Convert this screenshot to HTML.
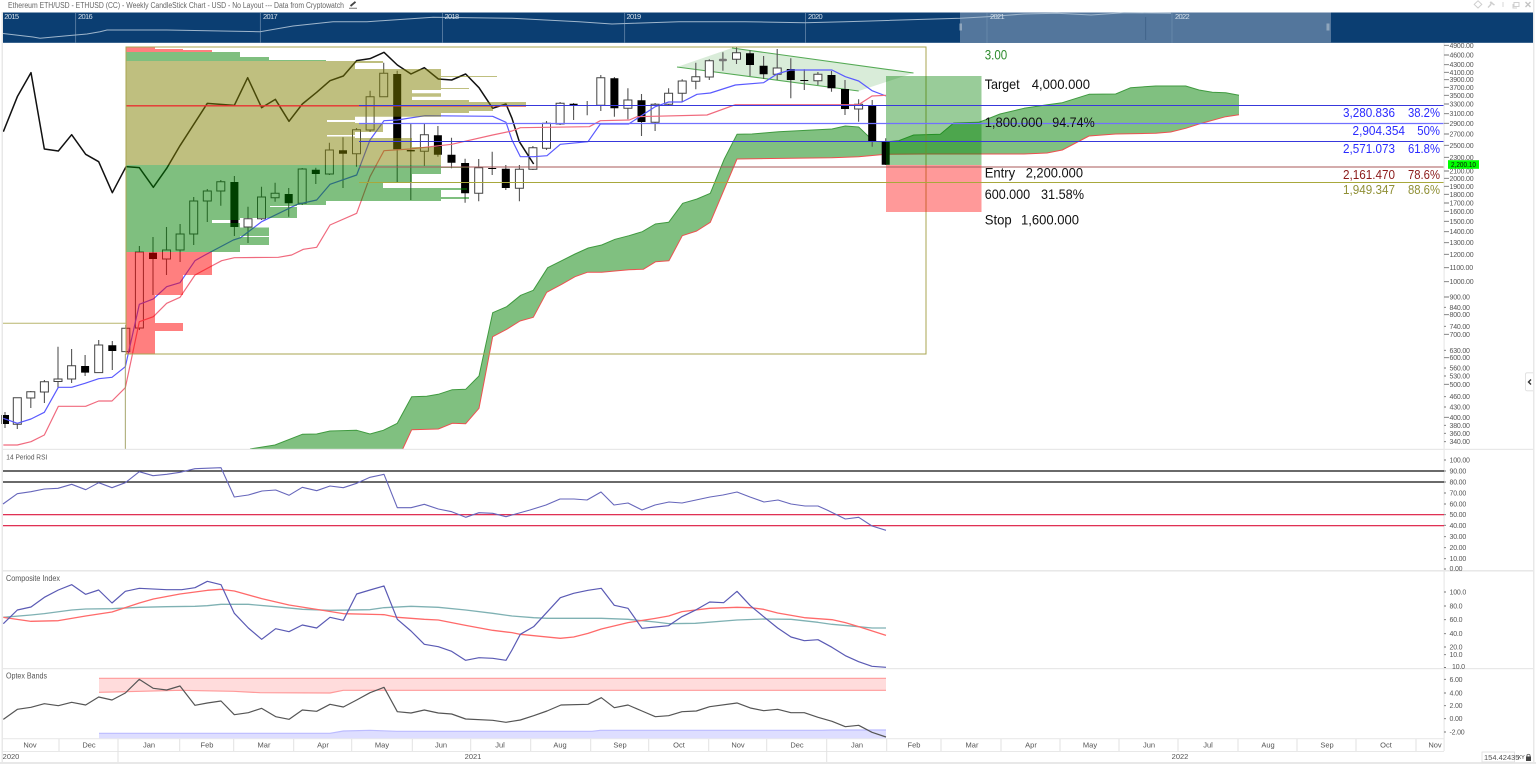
<!DOCTYPE html>
<html lang="en">
<head>
<meta charset="utf-8">
<title>Ethereum ETH/USD Weekly Chart</title>
<style>
html,body{margin:0;padding:0;background:#fff;width:1536px;height:764px;overflow:hidden}
svg{display:block;filter:blur(.3px)}
text{font-family:"Liberation Sans",sans-serif}
.ax text{font-size:7px;letter-spacing:-.2px;fill:#555}
.tm text{font-size:7.5px;fill:#555;text-anchor:middle}
.nv text{font-size:7.5px;fill:#d5e0ea}
.big text{font-size:14px;fill:#111}
.fb text{font-size:12.5px}
.ln{fill:none;stroke-linejoin:round}
</style>
</head>
<body>
<svg width="1536" height="764" viewBox="0 0 1536 764" xmlns="http://www.w3.org/2000/svg">
<rect width="1536" height="764" fill="#fff"/>

<!-- title -->
<text x="8" y="8" font-size="8" fill="#666" textLength="336" lengthAdjust="spacingAndGlyphs">Ethereum ETH/USD - ETHUSD (CC) - Weekly CandleStick Chart - USD - No Layout --- Data from Cryptowatch</text>
<path d="M350.5 6L355.5 1.8" stroke="#444" stroke-width="1.8" fill="none"/><path d="M349 8.2H357" stroke="#555" stroke-width=".8"/>

<!-- window icons -->
<g fill="none" stroke="#cfcfcf" stroke-width="1">
<path d="M1478 .8L1481.8 4.4L1478 8L1474.2 4.4Z"/>
<path d="M1488 7.5L1491 4.5M1490 2L1494.5 5M1492 1.8L1490 5.5" stroke-width="1.4"/>
<path d="M1503 2V7" stroke="#e6e6e6" stroke-width="1.6"/>
<path d="M1514 2.5H1519V6.5H1514ZM1513 4V8H1517"/>
<path d="M1525.5 2L1530.5 7M1530.5 2L1525.5 7" stroke-width="1.4" stroke="#c4c4c4"/>
</g>

<!-- navigator -->
<g class="nv">
<rect x="3" y="12.5" width="1530" height="30.3" fill="#0b3e72"/>
<rect x="960" y="12.5" width="371" height="30.3" fill="#53769c"/>
<path d="M75.7 13V43M260.3 13V43M442.5 13V43M624.7 13V43M805.5 13V43M987 13V43M1172 13V43" stroke="#6f8fb0" stroke-width=".7"/>
<path d="M1145.7 17V40" stroke="#3d5f85" stroke-width=".8"/>
<path d="M3 33.5L33 37L40 38.3L67 35.7L87 34L100 31.7L107 30L167 30L260 31.7L293 26L333 21.7L367 21.7L433 17.3L512 18.3L579 21.7L612 24L679 21.7L745 21.7L805 22.7L845 21.7L960 18.3L987 16.7L1024 14L1057 13.3L1091 15L1124 12.7L1171 13.3" fill="none" stroke="#9fb6cc" stroke-width="1"/>
<rect x="959.5" y="23.5" width="2.5" height="7" fill="#8fa5bc"/><rect x="1326.5" y="23.5" width="3" height="7" fill="#8fa5bc"/>
<text x="4.3" y="19" textLength="14.7">2015</text>
<text x="78" y="19" textLength="14.7">2016</text>
<text x="263" y="19" textLength="14.7">2017</text>
<text x="444.5" y="19" textLength="14.7">2018</text>
<text x="626.5" y="19" textLength="14.7">2019</text>
<text x="808" y="19" textLength="14.7">2020</text>
<text x="990" y="19" textLength="14.7">2021</text>
<text x="1175" y="19" textLength="14.7">2022</text>
</g>

<!-- cloud -->
<polygon fill="#80c080" points="250,449 275,445 302.3,434.3 316.7,434 330,431 356.7,430.3 370,434 383.3,430.3 397.3,423.3 411.7,396.7 426.7,396.3 438.3,394.3 452.3,389.7 465.7,389.3 479,376 492.7,312.7 506.7,306.7 520.7,295.3 533.3,290.3 547.7,267.7 561.7,260.7 575,254 588.3,248 601.7,245 615,239.3 629,235.7 642.3,231.7 655.3,224 668.7,222.3 682.7,203.3 697,199 710.3,193.3 724.3,159 737,134.3 752,134 778.7,131.7 832,129 845.3,126 858.7,127 865.3,133.3 873.7,141.3 885.7,142 898.7,140.7 913.7,135 940.3,134.3 953.7,123 978.7,122.3 985,120 1000,114 1024,108.3 1047.3,104.7 1062.3,102.7 1089,94.3 1115.7,94 1130.7,87.7 1155.7,86 1185.7,86 1199,90 1212.3,92.3 1225.7,92.7 1239,95.3 1239,114.7 1225.7,116.7 1199,124 1185.7,128.3 1170.7,132 1155.7,133.3 1115.7,134 1089,136 1062.3,150 1047,153 1024,154 981,154 925,154 886,154.3 858.7,156.7 832,157.7 737,159 710.3,222.3 696.7,231 682.3,235.7 669,260.7 655.7,261.7 643.3,269.3 629,269.7 615,271 601.7,272.3 587.3,272.3 575,276.7 561.7,284.3 546.7,292.3 533.3,317.3 520,321 506.7,329.3 492.7,336.7 479,408.3 465.7,423.7 452.3,423.3 438.3,429 411.7,429.7 402.7,449"/>
<polyline class="ln" stroke="#3f9a3f" stroke-width="1" points="250,449 275,445 302.3,434.3 316.7,434 330,431 356.7,430.3 370,434 383.3,430.3 397.3,423.3 411.7,396.7 426.7,396.3 438.3,394.3 452.3,389.7 465.7,389.3 479,376 492.7,312.7 506.7,306.7 520.7,295.3 533.3,290.3 547.7,267.7 561.7,260.7 575,254 588.3,248 601.7,245 615,239.3 629,235.7 642.3,231.7 655.3,224 668.7,222.3 682.7,203.3 697,199 710.3,193.3 724.3,159 737,134.3 752,134 778.7,131.7 832,129 845.3,126 858.7,127 865.3,133.3 873.7,141.3 885.7,142 898.7,140.7 913.7,135 940.3,134.3 953.7,123 978.7,122.3 985,120 1000,114 1024,108.3 1047.3,104.7 1062.3,102.7 1089,94.3 1115.7,94 1130.7,87.7 1155.7,86 1185.7,86 1199,90 1212.3,92.3 1225.7,92.7 1239,95.3"/>
<polyline class="ln" stroke="#ee5050" stroke-width="1" points="402.7,449 411.7,429.7 438.3,429 452.3,423.3 465.7,423.7 479,408.3 492.7,336.7 506.7,329.3 520,321 533.3,317.3 546.7,292.3 561.7,284.3 575,276.7 587.3,272.3 601.7,272.3 615,271 629,269.7 643.3,269.3 655.7,261.7 669,260.7 682.3,235.7 696.7,231 710.3,222.3 737,159 832,157.7 858.7,156.7 886,154.3 925,154 981,154 1024,154 1047,153 1062.3,150 1089,136 1115.7,134 1155.7,133.3 1170.7,132 1185.7,128.3 1199,124 1225.7,116.7 1239,114.7"/>

<!-- channel -->
<polygon points="677,67 732,48 913.5,73 858.7,91" fill="#008000" fill-opacity=".15"/>
<path d="M732 48L913.5 73M677 67L858.7 91" stroke="#55aa55" stroke-width="1.1" fill="none"/>

<!-- wicks -->
<path fill="none" stroke="#555" stroke-width="1.1" d="M5 412V428M17.3 398V429M30.8 391V408M44.4 380V403M58 346.7V388M71.6 349V383M85.1 355V376M98.7 340V373M112.3 341V370M125.8 325V352M139.4 246V330M153 237V295M166.5 227V275M180.1 224V262M193.7 197V245M207.3 189V222M220.8 180V205.7M234.4 176V236M248 206.7V243M261.5 186.7V220M275.1 182.7V201.7M288.7 188V216.7M302.2 168V205M315.8 167.7V184M329.4 142.7V175M343 137.3V188M356.5 128V166.7M370.1 90.7V132M383.7 62.7V97M397.2 70.7V182.3M410.8 123.3V200M424.4 124V165.7M437.9 126V156.7M451.5 137.7V168.3M465.1 158.7V202.7M478.7 159V201.3M492.2 151.7V175M505.8 165V190M519.4 165V201.3M532.9 146V170M546.5 121V150M560.1 102V125M573.6 103V120M587.2 101V115.3M600.8 75V111M614.4 77V116.7M627.9 88.3V119.3M641.5 94V136M655.1 103V131M668.6 88.3V105M682.2 79.3V101.7M695.8 62.7V89.3M709.3 59.3V80M722.9 52.3V70.7M736.5 47.3V64M750 50.3V76M763.6 56V79M777.2 49V80M790.8 58.3V98.3M804.3 69.3V90M817.9 72V85M831.5 71V91.7M845 80V115M858.6 99.3V121.7M872.2 100V146.7M885.7 138.3V165"/>
<!-- hollow bodies -->
<path fill="#fff" stroke="#444" stroke-width="1" d="M13.3 397.7h8v26.6h-8zM26.8 391.7h8v6.3h-8zM40.4 381.7h8v10.3h-8zM54 379h8v2.5h-8zM67.6 365.7h8v13.3h-8zM94.7 345h8v27.6h-8zM121.8 328.3h8v23.3h-8zM135.4 252h8v76h-8zM162.5 250h8v9h-8zM176.1 234h8v16h-8zM189.7 201h8v33h-8zM203.3 191h8v10h-8zM216.8 181.7h8v9.3h-8zM244 218.7h8v8.3h-8zM257.5 197h8v21.7h-8zM271.1 193.3h8v4.4h-8zM298.2 169h8v34.3h-8zM325.4 150h8v24h-8zM352.5 129.7h8v24h-8zM366.1 96.7h8v33.3h-8zM379.7 73.3h8v23.4h-8zM420.4 134.7h8v16.6h-8zM474.7 167.7h8v25.6h-8zM515.4 169.3h8v19h-8zM528.9 147.7h8v21.6h-8zM542.5 123.3h8v25h-8zM556.1 103.3h8v20.7h-8zM596.8 77.7h8v27.6h-8zM623.9 100h8v8.3h-8zM651.1 104.3h8v18h-8zM664.6 93.3h8v11h-8zM678.2 81h8v12.3h-8zM691.8 76.7h8v4.6h-8zM705.3 60.7h8v16.3h-8zM732.5 52.7h8v6.6h-8zM773.2 68h8v6.3h-8zM813.9 74.3h8v6.4h-8zM854.6 104.3h8v4.7h-8z"/>
<!-- black bodies -->
<path fill="#000" d="M1 415h8v9h-8zM81.1 366h8v6.6h-8zM108.3 345.3h8v5.7h-8zM149 252.7h8v6.3h-8zM230.4 182h8v45h-8zM284.7 194h8v9.3h-8zM311.8 169.7h8v4.3h-8zM339 150.3h8v3.4h-8zM393.2 74h8v75.3h-8zM406.8 150h8v1.4h-8zM433.9 135.3h8v19.4h-8zM447.5 154.7h8v8h-8zM461.1 163h8v30.3h-8zM488.2 168h8v1h-8zM501.8 168.7h8v19.3h-8zM569.6 103.7h8v1.5h-8zM610.4 78.3h8v30h-8zM637.5 100.3h8v21.7h-8zM746 53.3h8v11.7h-8zM759.6 65.7h8v8.6h-8zM786.8 69h8v11h-8zM800.3 80h8v1h-8zM827.5 75h8v13.3h-8zM841 89h8v20h-8zM868.2 105h8v36.7h-8zM881.7 141.7h8v23h-8z"/>
<rect x="718.9" y="58.7" width="8" height="2.6" rx="1" fill="#777"/>

<!-- moving lines: values in 3x coords -->
<g transform="scale(.33333)" fill="none" stroke-linejoin="round">
<polyline stroke="#111" stroke-width="4.5" points="10,395 52,290 93,218 133,447 175,453 215,404 257,463 296,485 337,578 378,500 418,503 460,562 500,505 540,437 622,310 703,316 743,233 785,323 826,298 867,364 907,312 950,277 990,242 1030,228 1070,182 1110,176 1152,157 1192,195 1233,222 1273,203 1315,237 1355,240 1397,222 1437,263 1478,325 1518,312 1536,355 1558,425 1601,492"/>
<polyline stroke="#5a5aff" stroke-width="3.6" points="10,1255 52,1270 93,1257 133,1237 175,1162 215,1162 255,1150 296,1136 336,1132 376,1100 418,913 460,897 500,860 540,848 585,782 615,765 700,720 722,713 785,665 892,613 950,600 990,553 1070,525 1110,420 1152,362 1192,360 1275,347 1478,349 1518,367 1536,420 1561,470 1601,470 1641,467 1681,433 1764,425 1801,372 1886,372 1966,320 2006,306 2046,306 2091,283 2131,279 2206,255 2291,248 2331,222 2371,210 2496,210 2536,230 2576,243 2616,272 2658,288"/>
<polyline stroke="#f06a7e" stroke-width="3.6" points="10,1335 52,1335 93,1325 133,1305 175,1219 257,1219 296,1203 336,1203 376,1163 418,965 460,950 500,910 540,892 585,825 635,798 665,782 703,773 835,772 875,765 910,748 950,742 990,675 1070,640 1110,530 1152,452 1230,447 1355,433 1478,405 1536,393 1561,383 1768,380 1801,362 1888,360 1911,350 2121,345 2206,314 2536,314 2576,314 2616,288 2658,286"/>
</g>

<!-- volume profile overlay -->
<path fill="#808000" fill-opacity=".5" d="M126 61H383V63H126zM126 63H355V69H126zM126 69H441V76H126zM126 76H497V77H126zM126 77H441V84H126zM126 84H441V88H126zM126 88H469V89H126zM126 89H441V90H126zM126 90H412V93.3H126zM126 93.3H441V96.7H126zM126 96.7H412V100H126zM126 100H469V102H126zM126 102H526V106.7H126zM126 106.7H493V111H126zM126 111H469V113H126zM126 113H441V116.7H126zM126 116.7H355V120H126zM126 120H327V122H126zM126 122H355V123H126zM126 123H383V132H126zM126 132H355V135H126zM126 135H327V136.5H126zM126 136.5H355V138H126zM126 138H412V147H126zM126 147H441V165H126z"/>
<path fill="#008000" fill-opacity=".5" d="M126 52H240V57H126zM126 57H269V60H126zM126 60H326V61H126zM126 165H441V167H126zM126 167H469V168H126zM126 168H441V174H126zM126 174H412V183H126zM126 183H383V188H126zM126 188H467V190H126zM126 190H441V197H126zM126 197H469V199H126zM126 199H441V201H126zM126 201H326V205H126zM126 205H297V206H126zM126 206H270V207H126zM126 207H297V218H126zM126 218H240V220H126zM126 220H212V223H126zM126 223H240V227.5H126zM126 227.5H269V236H126zM126 236H240V237H126zM126 237H269V245H126zM126 245H240V252H126z"/>
<path fill="#ff0000" fill-opacity=".5" d="M126 47H155V49H126zM126 49H183V50H126zM126 50H212V52H126zM126 252H212V275H126zM126 275H183V295H126zM126 295H155V323H126zM126 323H183V331H126zM126 331H155V354H126z"/>

<!-- red POC -->
<path d="M126 105.8H526" stroke="#e83030" stroke-width="1.3"/>

<!-- gann box -->
<rect x="126" y="47" width="800" height="307" fill="none" stroke="#a8a650" stroke-width="1"/>
<path d="M3 323.3H126" stroke="#b8b66e" stroke-width="1"/>
<path d="M125.3 354V449" stroke="#9a9a5a" stroke-width=".9"/>

<!-- R:R rects -->
<rect x="886" y="76" width="95.5" height="89" fill="#008000" fill-opacity=".4"/>
<rect x="886" y="165" width="95.5" height="47" fill="#ff0000" fill-opacity=".4"/>

<!-- fib lines -->
<path d="M359 105.5H1444" stroke="#3838dc" stroke-width=".9"/>
<path d="M359 123.5H1444" stroke="#7070ff" stroke-width="1.3"/>
<path d="M359 141.5H1444" stroke="#3838dc" stroke-width=".9"/>
<path d="M359 167H1444" stroke="#a85a5a" stroke-width="1.1"/>
<path d="M359 182.5H1444" stroke="#a8a83c" stroke-width="1"/>

<!-- big labels -->
<g class="big">
<text x="984.7" y="59.3" style="fill:#2e8b2e" textLength="22.5" lengthAdjust="spacingAndGlyphs">3.00</text>
<text x="984.7" y="89" textLength="35" lengthAdjust="spacingAndGlyphs">Target</text>
<text x="1031.7" y="89" textLength="58.3" lengthAdjust="spacingAndGlyphs">4,000.000</text>
<text x="984.7" y="126.8" textLength="58" lengthAdjust="spacingAndGlyphs">1,800.000</text>
<text x="1052.3" y="126.8" textLength="42.4" lengthAdjust="spacingAndGlyphs">94.74%</text>
<text x="984.7" y="177.7" textLength="30.5" lengthAdjust="spacingAndGlyphs">Entry</text>
<text x="1025.7" y="177.7" textLength="57.3" lengthAdjust="spacingAndGlyphs">2,200.000</text>
<text x="984.7" y="199" textLength="45.5" lengthAdjust="spacingAndGlyphs">600.000</text>
<text x="1041" y="199" textLength="43" lengthAdjust="spacingAndGlyphs">31.58%</text>
<text x="984.7" y="224.3" textLength="27" lengthAdjust="spacingAndGlyphs">Stop</text>
<text x="1021" y="224.3" textLength="58" lengthAdjust="spacingAndGlyphs">1,600.000</text>
</g>

<!-- fib labels -->
<g class="fb">
<g fill="#2a2aff">
<text x="1343" y="117" textLength="52" lengthAdjust="spacingAndGlyphs">3,280.836</text>
<text x="1408" y="117" textLength="32" lengthAdjust="spacingAndGlyphs">38.2%</text>
<text x="1352.5" y="135" textLength="52.5" lengthAdjust="spacingAndGlyphs">2,904.354</text>
<text x="1417.3" y="135" textLength="22.7" lengthAdjust="spacingAndGlyphs">50%</text>
<text x="1343" y="153" textLength="52" lengthAdjust="spacingAndGlyphs">2,571.073</text>
<text x="1408" y="153" textLength="32" lengthAdjust="spacingAndGlyphs">61.8%</text>
</g>
<g fill="#8b1a1a">
<text x="1343" y="179" textLength="52" lengthAdjust="spacingAndGlyphs">2,161.470</text>
<text x="1408" y="179" textLength="32" lengthAdjust="spacingAndGlyphs">78.6%</text>
</g>
<g fill="#8f8f35">
<text x="1343" y="194" textLength="52" lengthAdjust="spacingAndGlyphs">1,949.347</text>
<text x="1408" y="194" textLength="32" lengthAdjust="spacingAndGlyphs">88.6%</text>
</g>
</g>

<!-- panel separators -->
<g fill="#e8e8e8">
<rect x="3" y="448.8" width="1530" height="1.2"/>
<rect x="3" y="570" width="1530" height="1.6"/>
<rect x="3" y="668" width="1530" height="1.2"/>
<rect x="3" y="738.2" width="1441" height="1"/>
<rect x="3" y="751" width="1441" height="1"/>
<rect x="0" y="762" width="1536" height="2"/>
<rect x="1.5" y="12" width="1.5" height="752"/>
<rect x="1443.5" y="43" width="1.2" height="708"/>
<rect x="1533" y="0" width="1.5" height="764"/>
</g>

<!-- RSI -->
<path d="M3 471H1444M3 482H1444" stroke="#111" stroke-width="1.2"/>
<path d="M3 514.7H1444M3 525.7H1444" stroke="#dc143c" stroke-width="1.2"/>
<polyline class="ln" stroke="#6666bb" stroke-width="1.1" points="3,504 17.3,493.7 31,491.7 44.3,489 58,488.3 71.7,484.3 85.7,489.7 98.7,482.7 112,487.7 125.3,482.7 139.3,471.7 153,475.7 166.7,474.3 180,472.3 195,468.7 221,467.7 234.3,497 248.3,495 262,491 275.7,490 289,495.3 302.3,487.3 316.7,490.7 330,486 343.3,487.7 356.7,483.3 370,477.3 384,474.3 397.3,507.7 411,507.7 424.3,504.3 438.3,509 451.7,511.7 465.7,517.3 479,512.7 492.7,513.3 506,516.7 512,515 530,510 546,505 560,499 574,499 587,500 601,492 614,505 628,503 642,510 655,505 669,502 682,503 696,500 710,497 723,495 737,492 750,497 764,502 778,500 791,504 805,506 818,506 827,510 845.3,519 858.7,517.3 872,526 886,530.3"/>

<!-- Composite, Optex: 3x coords -->
<g transform="translate(0,510) scale(.33333)" fill="none" stroke-linejoin="round" stroke-width="3.6">
<polyline stroke="#5f9ea0" stroke-opacity=".8" stroke-width="3.9" points="10,322 93,315 133,311 215,300 257,297 336,296 418,292 500,290 585,289 622,287 663,283 745,283 827,290 907,298 990,301 1110,299 1152,293 1233,289 1315,292 1397,300 1478,310 1536,318 1601,323 1641,325 1804,325 1884,328 1966,336 2006,341 2086,340 2211,330 2291,327 2373,328 2454,337 2496,343 2576,350 2616,354 2658,354"/>
<polyline stroke="#ff6a6a" stroke-width="3.9" points="10,322 93,334 175,332 257,318 336,306 418,279 460,267 540,252 622,241 663,238 703,243 785,266 867,285 950,298 1030,311 1152,314 1192,322 1273,328 1315,330 1397,346 1478,361 1536,368 1561,373 1681,385 1721,381 1764,370 1804,357 1884,338 1966,325 2006,318 2046,305 2129,295 2211,292 2251,293 2291,298 2333,309 2413,323 2496,329 2536,338 2576,350 2658,376"/>
<polyline stroke="#5a5ab4" points="10,341 52,300 93,291 133,262 175,240 215,224 257,253 296,240 336,279 376,244 418,235 500,239 545,239 585,233 622,214 663,224 703,310 745,354 785,388 827,356 867,365 907,345 950,354 990,322 1030,331 1070,252 1110,240 1152,228 1192,328 1233,363 1273,403 1315,410 1355,424 1397,451 1437,443 1478,445 1518,451 1536,420 1561,373 1601,350 1681,263 1721,250 1764,241 1804,235 1843,286 1884,295 1926,355 1966,351 2006,347 2046,320 2089,299 2129,276 2171,278 2211,244 2251,287 2291,320 2333,354 2373,381 2413,392 2454,389 2496,412 2536,437 2576,455 2616,469 2658,472"/>
<!-- optex red band -->
<polygon fill="#ffdcdc" points="297,505 1536,505 2658,505 2658,541 1536,541 1030,541 990,549 780,548 700,544 540,541 297,547"/>
<polyline stroke="#ff9a9a" points="297,505 2658,505"/>
<polyline stroke="#ff9a9a" points="297,547 540,541 700,544 780,548 990,549 1030,541 2658,541"/>
<!-- optex blue band -->
<polygon fill="#dedeff" points="297,670 990,670 1030,663 1110,661 1190,664 1776,664 1801,661 2466,661 2496,660 2658,660 2658,685 297,685"/>
<polyline stroke="#bcbcff" points="297,670 990,670 1030,663 1110,661 1190,664 1776,664 1801,661 2466,661 2496,660 2658,660"/>
<polyline stroke="#555" points="10,628 52,598 93,592 133,581 175,587 215,577 257,585 296,561 336,570 376,549 418,508 460,535 500,540 540,528 585,586 622,579 663,573 703,614 745,608 785,595 827,620 867,628 907,600 950,604 990,583 1030,591 1070,570 1110,548 1152,532 1192,605 1233,609 1273,600 1315,609 1355,612 1397,627 1478,631 1518,637 1536,634 1561,630 1601,617 1641,603 1683,585 1764,583 1804,563 1843,593 1884,585 1926,603 1966,620 2006,617 2046,605 2089,603 2129,590 2211,579 2251,594 2291,602 2333,598 2373,608 2413,608 2454,622 2496,634 2536,650 2576,646 2616,667 2658,681"/>
</g>

<!-- panel titles -->
<text x="6.3" y="459.3" font-size="7.5" fill="#555" textLength="41" lengthAdjust="spacingAndGlyphs">14 Period RSI</text>
<text x="6" y="581" font-size="8" fill="#555" textLength="54" lengthAdjust="spacingAndGlyphs">Composite Index</text>
<text x="6" y="678.7" font-size="8" fill="#555" textLength="41" lengthAdjust="spacingAndGlyphs">Optex Bands</text>

<!-- axis ticks -->
<path fill="none" stroke="#777" stroke-width=".9" d="M1444 45.3h5M1444 55h5M1444 64.7h5M1444 72.3h5M1444 79.7h5M1444 87.3h5M1444 95.3h5M1444 104h5M1444 113.7h5M1444 123.3h5M1444 134h5M1444 145.3h5M1444 157.3h5M1444 171h5M1444 178.3h5M1444 186.3h5M1444 194.3h5M1444 203h5M1444 211.3h5M1444 221.3h5M1444 231.7h5M1444 242.7h5M1444 254.3h5M1444 267.7h5M1444 281.7h5M1444 297h5M1444 307.3h2M1444 314.7h5M1444 326.3h2M1444 334.3h5M1444 350.3h2M1444 357.7h5M1444 368h2M1444 376h2M1444 384.3h5M1444 396.7h2M1444 407h2M1444 417.3h5M1444 425.3h2M1444 433.3h2M1444 441.7h2M1444 460h2M1444 471h2M1444 482h2M1444 493h2M1444 504h2M1444 514.7h2M1444 525.3h2M1444 536.7h2M1444 547.7h2M1444 558.7h2M1444 569h2M1444 592h2M1444 606h2M1444 619.7h2M1444 633.7h2M1444 647h2M1444 654.7h2M1444 667.5h2M1444 679.3h2M1444 693h2M1444 705.7h2M1444 718.7h2M1444 732h2"/>

<!-- axis labels -->
<g class="ax">
<text x="1449.5" y="47.8">4900.00</text><text x="1449.5" y="57.5">4600.00</text><text x="1449.5" y="67.2">4300.00</text><text x="1449.5" y="74.8">4100.00</text><text x="1449.5" y="82.2">3900.00</text><text x="1449.5" y="89.8">3700.00</text><text x="1449.5" y="97.8">3500.00</text><text x="1449.5" y="106.5">3300.00</text><text x="1449.5" y="116.2">3100.00</text><text x="1449.5" y="125.8">2900.00</text><text x="1449.5" y="136.5">2700.00</text><text x="1449.5" y="147.8">2500.00</text><text x="1449.5" y="159.8">2300.00</text><text x="1449.5" y="173.5">2100.00</text><text x="1449.5" y="180.8">2000.00</text><text x="1449.5" y="188.8">1900.00</text><text x="1449.5" y="196.8">1800.00</text><text x="1449.5" y="205.5">1700.00</text><text x="1449.5" y="213.8">1600.00</text><text x="1449.5" y="223.8">1500.00</text><text x="1449.5" y="234.2">1400.00</text><text x="1449.5" y="245.2">1300.00</text><text x="1449.5" y="256.8">1200.00</text><text x="1449.5" y="270.2">1100.00</text><text x="1449.5" y="284.2">1000.00</text><text x="1449.5" y="299.5">900.00</text><text x="1449.5" y="309.8">840.00</text><text x="1449.5" y="317.2">800.00</text><text x="1449.5" y="328.8">740.00</text><text x="1449.5" y="336.8">700.00</text><text x="1449.5" y="352.8">630.00</text><text x="1449.5" y="360.2">600.00</text><text x="1449.5" y="370.5">560.00</text><text x="1449.5" y="378.5">530.00</text><text x="1449.5" y="386.8">500.00</text><text x="1449.5" y="399.2">460.00</text><text x="1449.5" y="409.5">430.00</text><text x="1449.5" y="419.8">400.00</text><text x="1449.5" y="427.8">380.00</text><text x="1449.5" y="435.8">360.00</text><text x="1449.5" y="444.2">340.00</text>
<text x="1449.5" y="462.5">100.00</text><text x="1449.5" y="473.5">90.00</text><text x="1449.5" y="484.5">80.00</text><text x="1449.5" y="495.5">70.00</text><text x="1449.5" y="506.5">60.00</text><text x="1449.5" y="517.2">50.00</text><text x="1449.5" y="527.8">40.00</text><text x="1449.5" y="539.2">30.00</text><text x="1449.5" y="550.2">20.00</text><text x="1449.5" y="561.2">10.00</text><text x="1449.5" y="571">0.00</text>
<text x="1449.5" y="594.5">100.0</text><text x="1449.5" y="608.5">80.0</text><text x="1449.5" y="622.2">60.0</text><text x="1449.5" y="636.2">40.0</text><text x="1449.5" y="649.5">20.0</text><text x="1449.5" y="657.2">10.0</text><text x="1452" y="669">10.0</text>
<text x="1449.5" y="681.8">6.00</text><text x="1449.5" y="695.5">4.00</text><text x="1449.5" y="708.2">2.00</text><text x="1449.5" y="721.2">0.00</text><text x="1449.5" y="734.5">-2.00</text>
</g>

<!-- price tag -->
<rect x="1448" y="160.2" width="31" height="8.6" fill="#00ff00"/>
<text x="1451" y="167" font-size="7" fill="#111" textLength="25" lengthAdjust="spacingAndGlyphs">2,200.10</text>

<!-- side tab -->
<path d="M1533 372.8H1527Q1525.5 372.8 1525.5 374.5V389Q1525.5 390.8 1527 390.8H1533" fill="#fff" stroke="#ddd" stroke-width=".8"/>
<path d="M1531 379.5L1528.5 382L1531 384.5" fill="none" stroke="#333" stroke-width="1.4"/>

<!-- time axis -->
<path stroke="#e2e2e2" stroke-width="1" d="M59 739V751M118 739V762M179.7 739V751M233.7 739V751M293.7 739V751M351.7 739V751M412.3 739V751M470.7 739V751M530.7 739V751M590.7 739V751M648.7 739V751M708.7 739V751M766.7 739V751M826.7 739V762M886.7 739V751M941 739V751M1001 739V751M1060 739V751M1119 739V751M1178 739V751M1238 739V751M1297 739V751M1356 739V751M1416 739V751"/>
<g class="tm">
<text x="30" y="747.5">Nov</text><text x="89" y="747.5">Dec</text><text x="149" y="747.5">Jan</text><text x="207" y="747.5">Feb</text><text x="264" y="747.5">Mar</text><text x="323" y="747.5">Apr</text><text x="382" y="747.5">May</text><text x="441" y="747.5">Jun</text><text x="500" y="747.5">Jul</text><text x="560" y="747.5">Aug</text><text x="620" y="747.5">Sep</text><text x="679" y="747.5">Oct</text><text x="738" y="747.5">Nov</text><text x="797" y="747.5">Dec</text><text x="857" y="747.5">Jan</text><text x="914" y="747.5">Feb</text><text x="972" y="747.5">Mar</text><text x="1031" y="747.5">Apr</text><text x="1090" y="747.5">May</text><text x="1149" y="747.5">Jun</text><text x="1208" y="747.5">Jul</text><text x="1268" y="747.5">Aug</text><text x="1327" y="747.5">Sep</text><text x="1386" y="747.5">Oct</text><text x="1435" y="747.5">Nov</text>
<text x="11" y="759">2020</text><text x="473" y="759">2021</text><text x="1180" y="759">2022</text>
</g>

<!-- bottom right controls -->
<rect x="1482" y="752" width="32.5" height="10" fill="#fff" stroke="#ddd" stroke-width=".8"/>
<svg x="1483" y="752" width="31" height="10"><text x="1" y="8" font-size="7.5" fill="#555">154.42435</text></svg>
<text x="1517.5" y="759" font-size="5.5" fill="#444">XY</text>
<rect x="1526" y="756.5" width="5" height="4.5" fill="#444"/><path d="M1527 756.5V755Q1528.5 753.5 1530 755V756.5" fill="none" stroke="#444" stroke-width=".8"/>
</svg>
</body>
</html>
